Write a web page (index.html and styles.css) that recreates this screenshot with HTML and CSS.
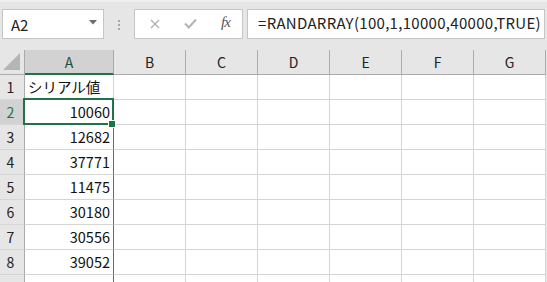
FILE: index.html
```html
<!DOCTYPE html>
<html lang="ja">
<head>
<meta charset="utf-8">
<link rel="stylesheet" href="styles.css">
</head>
<body>
<div class="app">
  <div class="toolbar">
    <div class="namebox">
      <span class="name">A2</span>
      <svg class="caret" width="8" height="5" viewBox="0 0 8 5"><path d="M0 0H8L4 4.5Z" fill="#6b6b6b"/></svg>
    </div>
    <div class="grip"><i></i><i></i><i></i></div>
    <div class="buttons">
      <svg class="btn-x" width="10" height="10" viewBox="0 0 10 10"><path d="M1 1L9 9M9 1L1 9" stroke="#b3b3b3" stroke-width="1.4" fill="none"/></svg>
      <svg class="btn-ok" width="13" height="11" viewBox="0 0 13 11"><path d="M1 5.5L4.8 9.5L12 1.5" stroke="#b3b3b3" stroke-width="2" fill="none"/></svg>
      <span class="fx">fx</span>
    </div>
    <div class="formula">=RANDARRAY(100,1,10000,40000,TRUE)</div>
  </div>
  <div class="sheet">
    <div class="corner"><svg width="18" height="18" viewBox="0 0 18 18"><path d="M17 0V17H0Z" fill="#b5b5b5"/></svg></div>
    <div class="ch sel">A</div><div class="ch">B</div><div class="ch">C</div><div class="ch">D</div><div class="ch">E</div><div class="ch">F</div><div class="ch">G</div><div class="edge"></div>

    <div class="rh">1</div><div class="c a">シリアル値</div><div class="c"></div><div class="c"></div><div class="c"></div><div class="c"></div><div class="c"></div><div class="c"></div><div class="edge"></div>
    <div class="rh sel">2</div><div class="c a num active">10060</div><div class="c"></div><div class="c"></div><div class="c"></div><div class="c"></div><div class="c"></div><div class="c"></div><div class="edge"></div>
    <div class="rh">3</div><div class="c a num spill">12682</div><div class="c"></div><div class="c"></div><div class="c"></div><div class="c"></div><div class="c"></div><div class="c"></div><div class="edge"></div>
    <div class="rh">4</div><div class="c a num spill">37771</div><div class="c"></div><div class="c"></div><div class="c"></div><div class="c"></div><div class="c"></div><div class="c"></div><div class="edge"></div>
    <div class="rh">5</div><div class="c a num spill">11475</div><div class="c"></div><div class="c"></div><div class="c"></div><div class="c"></div><div class="c"></div><div class="c"></div><div class="edge"></div>
    <div class="rh">6</div><div class="c a num spill">30180</div><div class="c"></div><div class="c"></div><div class="c"></div><div class="c"></div><div class="c"></div><div class="c"></div><div class="edge"></div>
    <div class="rh">7</div><div class="c a num spill">30556</div><div class="c"></div><div class="c"></div><div class="c"></div><div class="c"></div><div class="c"></div><div class="c"></div><div class="edge"></div>
    <div class="rh">8</div><div class="c a num spill">39052</div><div class="c"></div><div class="c"></div><div class="c"></div><div class="c"></div><div class="c"></div><div class="c"></div><div class="edge"></div>
    <div class="rh">9</div><div class="c a num spill">36438</div><div class="c"></div><div class="c"></div><div class="c"></div><div class="c"></div><div class="c"></div><div class="c"></div><div class="edge"></div>
  </div>
</div>
</body>
</html>
```
FILE: styles.css
```css
* { box-sizing: border-box; }
html, body { margin: 0; padding: 0; }
body {
  width: 547px;
  height: 282px;
  overflow: hidden;
  background: #e6e6e6;
  font-family: "Noto Sans CJK JP", "Noto Sans", sans-serif;
  color: #1f1f1f;
}
.app { width: 547px; }

.toolbar {
  height: 50px;
  display: flex;
  align-items: flex-start;
  padding: 9px 0 0 2px;
  background: #e6e6e6;
  border-top: 2px solid #f0f0f0;
}
.namebox {
  width: 102px;
  height: 30px;
  margin-top: -2px;
  background: #fff;
  border: 1px solid #c6c6c6;
  display: flex;
  align-items: center;
  justify-content: space-between;
  padding: 0 6px 0 8px;
}
.name { font-size: 15px; color: #222; line-height: 1; }
.caret { margin-top: -4px; }
.grip {
  width: 30px;
  height: 28px;
  display: flex;
  flex-direction: column;
  align-items: center;
  justify-content: center;
  gap: 2px;
}
.grip i { width: 2px; height: 2px; background: #a8a8a8; display: block; }
.buttons {
  width: 109px;
  height: 30px;
  margin-top: -2px;
  background: #fff;
  border: 1px solid #c6c6c6;
  display: flex;
  align-items: center;
  padding-left: 15px;
}
.btn-x { margin-top: -1px; }
.btn-ok { margin-left: 24px; margin-top: -2px; }
.fx {
  margin-left: 24px;
  font-family: "Liberation Serif", "DejaVu Serif", serif;
  font-style: italic;
  font-size: 15px;
  color: #555;
  letter-spacing: -1px;
  margin-top: -4px;
}
.formula {
  margin-left: 4px;
  width: 298px;
  height: 30px;
  margin-top: -2px;
  background: #fff;
  border: 1px solid #c6c6c6;
  font-size: 15px;
  letter-spacing: 0.3px;
  line-height: 26px;
  padding-left: 10px;
  white-space: nowrap;
  overflow: hidden;
  color: #222;
}

.sheet {
  display: grid;
  grid-template-columns: 25px 89px repeat(6, 72px) 1px;
  grid-auto-rows: 25px;
  background: #fff;
}
.corner {
  background: #e6e6e6;
  border-right: 1px solid #ababab;
  border-bottom: 1px solid #ababab;
  display: flex;
  align-items: flex-end;
  justify-content: flex-end;
  padding: 0 3px 3px 0;
}
.ch {
  background: #e6e6e6;
  border-right: 1px solid #ababab;
  border-bottom: 1px solid #ababab;
  font-size: 14px;
  text-align: center;
  line-height: 24px;
  color: #222;
}
.ch.sel {
  background: #d2d2d2;
  border-bottom: 2px solid #217346;
  color: #1f4f33;
}
.edge { background: #e6e6e6; }
.rh {
  background: #e6e6e6;
  border-right: 1px solid #ababab;
  border-bottom: 1px solid #d6d6d6;
  font-size: 14px;
  line-height: 24px;
  text-align: center;
  padding-right: 3px;
  color: #222;
}
.rh.sel { background: #d2d2d2; color: #217346; }
.c {
  border-right: 1px solid #d4d4d4;
  border-bottom: 1px solid #d4d4d4;
  font-size: 14.5px;
  line-height: 24px;
  white-space: nowrap;
  color: #111;
}
.c.a { padding: 0 3px; }
.c.num { text-align: right; }
.c.spill { border-right-color: #3f6fc0; }
.c.active { position: relative; }
.c.active::after {
  content: "";
  position: absolute;
  left: -2px;
  top: -2px;
  right: -1px;
  bottom: -1px;
  border: 2px solid #217346;
}
.c.active::before {
  content: "";
  position: absolute;
  right: -3px;
  bottom: -4px;
  width: 6px;
  height: 6px;
  background: #217346;
  border: 1px solid #fff;
  z-index: 2;
}
```
